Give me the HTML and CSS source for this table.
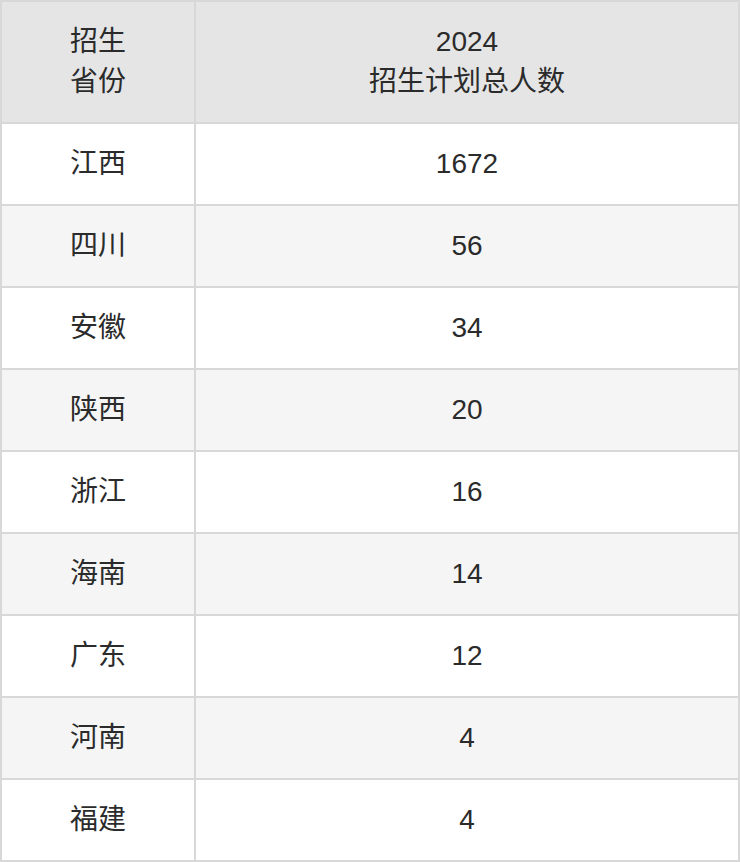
FILE: index.html
```html
<!DOCTYPE html>
<html lang="zh-CN">
<head>
<meta charset="utf-8">
<title>招生计划</title>
<link rel="stylesheet" href="styles.css">
</head>
<body>
<table class="plan">
  <thead>
    <tr>
      <th class="col-prov">招生<br>省份</th>
      <th class="col-num">2024<br>招生计划总人数</th>
    </tr>
  </thead>
  <tbody>
    <tr><td>江西</td><td>1672</td></tr>
    <tr><td>四川</td><td>56</td></tr>
    <tr><td>安徽</td><td>34</td></tr>
    <tr><td>陕西</td><td>20</td></tr>
    <tr><td>浙江</td><td>16</td></tr>
    <tr><td>海南</td><td>14</td></tr>
    <tr><td>广东</td><td>12</td></tr>
    <tr><td>河南</td><td>4</td></tr>
    <tr><td>福建</td><td>4</td></tr>
  </tbody>
</table>
</body>
</html>
```

FILE: styles.css
```css
html, body {
  margin: 0;
  padding: 0;
  background: #ffffff;
}

.plan {
  width: 740px;
  border-collapse: separate;
  border-spacing: 2px;
  background: #d8d8d8;
  table-layout: fixed;
  font-family: "Liberation Sans", "Noto Sans CJK SC", sans-serif;
  font-size: 28px;
  color: #2b2b2b;
}

.plan th,
.plan td {
  padding: 0;
  text-align: center;
  vertical-align: middle;
  font-weight: normal;
}

.plan th {
  height: 120px;
  line-height: 40px;
  background: #e5e5e5;
}

.plan .col-prov {
  width: 192px;
}

.plan td {
  height: 80px;
  line-height: 40px;
  background: #ffffff;
}

.plan tbody tr:nth-child(even) td {
  background: #f5f5f5;
}
```
